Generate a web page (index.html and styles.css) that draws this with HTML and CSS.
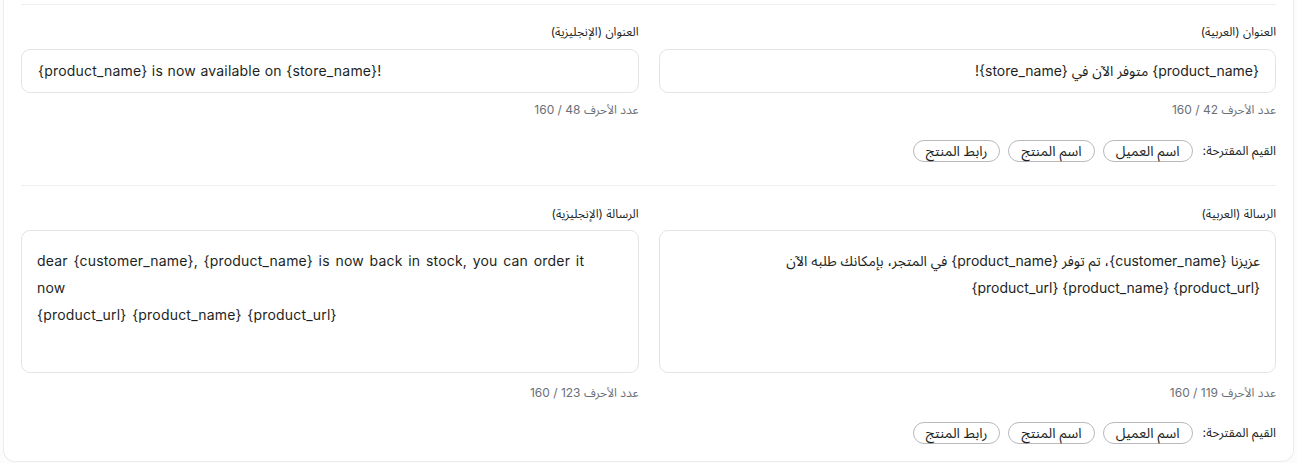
FILE: index.html
```html
<!DOCTYPE html>
<html lang="ar" dir="rtl">
<head>
<meta charset="utf-8">
<link rel="stylesheet" href="styles.css">
</head>
<body>
<div class="card">
  <section class="section first">
    <div class="grid">
      <div class="field">
        <label class="label">العنوان (العربية)</label>
        <div class="input" dir="rtl">{product_name} متوفر الآن في {store_name}!</div>
        <div class="counter">عدد الأحرف 42 / 160</div>
      </div>
      <div class="field">
        <label class="label">العنوان (الإنجليزية)</label>
        <div class="input" dir="ltr">{product_name} is now available on {store_name}!</div>
        <div class="counter">عدد الأحرف 48 / 160</div>
      </div>
    </div>
    <div class="suggest">
      <span class="suggest-label">القيم المقترحة:</span>
      <div class="chips">
        <span class="chip">اسم العميل</span>
        <span class="chip">اسم المنتج</span>
        <span class="chip">رابط المنتج</span>
      </div>
    </div>
  </section>
  <section class="section second">
    <div class="grid">
      <div class="field">
        <label class="label">الرسالة (العربية)</label>
        <div class="textarea" dir="rtl">عزيزنا {customer_name}، تم توفر {product_name} في المتجر، بإمكانك طلبه الآن<br>{product_url} {product_name} {product_url}</div>
        <div class="counter counter-lg">عدد الأحرف 119 / 160</div>
      </div>
      <div class="field">
        <label class="label">الرسالة (الإنجليزية)</label>
        <div class="textarea" dir="ltr">dear {customer_name}, {product_name} is now back in stock, you can order it<br>now<br>{product_url} {product_name} {product_url}</div>
        <div class="counter counter-lg">عدد الأحرف 123 / 160</div>
      </div>
    </div>
    <div class="suggest">
      <span class="suggest-label">القيم المقترحة:</span>
      <div class="chips">
        <span class="chip">اسم العميل</span>
        <span class="chip">اسم المنتج</span>
        <span class="chip">رابط المنتج</span>
      </div>
    </div>
  </section>
</div>
</body>
</html>
```
FILE: styles.css
```css
* { box-sizing: border-box; }
html, body { margin: 0; padding: 0; }
body {
  background: #fcfcfc;
  font-family: Inter, "Noto Sans Arabic", "DejaVu Sans", sans-serif;
  color: #1d1f23;
}
.card {
  margin: 0 3px;
  width: 1291px;
  height: 462px;
  background: #fff;
  border: 1px solid #ececec;
  border-top: none;
  border-radius: 0 0 12px 12px;
  padding: 4px 17px 0 17px;
}
.section {
  border-top: 1px solid #efefef;
}
.first { padding: 19px 0 21px; }
.second { padding: 20px 0 0; }
.grid {
  display: grid;
  grid-template-columns: 1fr 1fr;
  column-gap: 20px;
}
.field { display: flex; flex-direction: column; }
.label {
  font-size: 12px;
  line-height: 16px;
  color: #1d1f23;
  margin-bottom: 9px;
}
.second .label { margin-bottom: 8px; }
.input {
  height: 44px;
  border: 1px solid #e4e4e7;
  border-radius: 9px;
  padding: 0 16px;
  font-size: 14px;
  line-height: 42px;
  color: #1d1f23;
  white-space: nowrap;
}
.input[dir="ltr"] { text-align: left; letter-spacing: 0.2px; word-spacing: 0.3px; }
.textarea {
  height: 143px;
  border: 1px solid #e4e4e7;
  border-radius: 9px;
  padding: 16px 15px;
  font-size: 14px;
  line-height: 27px;
  color: #1d1f23;
}
.textarea[dir="ltr"] { text-align: left; letter-spacing: 0.2px; word-spacing: 1.5px; }
.counter {
  margin-top: 9px;
  font-size: 12px;
  line-height: 16px;
  color: #6b6f76;
}
.counter-lg { margin-top: 12px; }
.suggest {
  display: flex;
  align-items: center;
  gap: 10px;
  margin-top: 20px;
}
.second .suggest { margin-top: 19px; }
.suggest-label {
  font-size: 12.5px;
  color: #1d1f23;
}
.chips { display: flex; gap: 8px; }
.chip {
  height: 22px;
  border: 1px solid #b9b9bd;
  border-radius: 999px;
  padding: 0 12px;
  font-size: 14px;
  line-height: 20px;
  color: #1d1f23;
}
```
